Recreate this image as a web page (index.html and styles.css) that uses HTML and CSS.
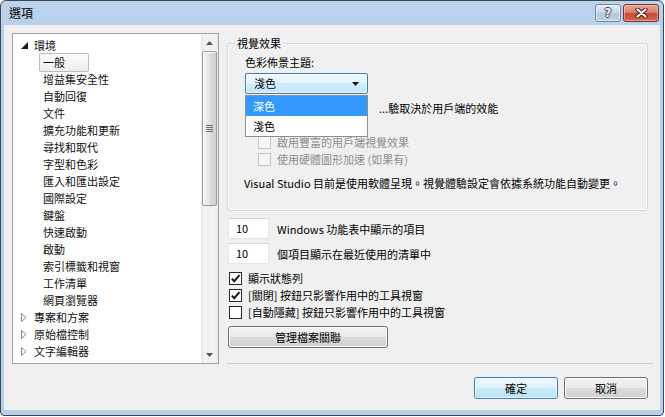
FILE: index.html
```html
<!DOCTYPE html>
<html lang="zh-Hant">
<head>
<meta charset="utf-8">
<title>選項</title>
<link rel="stylesheet" href="styles.css">
</head>
<body>
<div class="window">
  <div class="titlebar">
    <span class="title">選項</span>
    <div class="caption">
      <div class="cap-btn help"><span class="qmark">?</span></div>
      <div class="cap-btn close">
        <svg width="13" height="10" viewBox="0 0 13 10"><path d="M2.5 1.5 L10.5 8.5 M10.5 1.5 L2.5 8.5" stroke="#4b1d14" stroke-width="4.2" stroke-linecap="round"/><path d="M2.5 1.5 L10.5 8.5 M10.5 1.5 L2.5 8.5" stroke="#fff" stroke-width="2.2" stroke-linecap="round"/></svg>
      </div>
    </div>
  </div>
  <div class="client">
    <div class="main">
      <div class="tree">
        <ul class="nodes">
          <li class="node top"><span class="twisty"><svg width="7" height="7" viewBox="0 0 7 7"><polygon points="7,0 7,7 0,7" fill="#1a1a1a"/></svg></span><span class="label">環境</span></li>
          <li class="node child"><span class="label selected">一般</span></li>
          <li class="node child"><span class="label">增益集安全性</span></li>
          <li class="node child"><span class="label">自動回復</span></li>
          <li class="node child"><span class="label">文件</span></li>
          <li class="node child"><span class="label">擴充功能和更新</span></li>
          <li class="node child"><span class="label">尋找和取代</span></li>
          <li class="node child"><span class="label">字型和色彩</span></li>
          <li class="node child"><span class="label">匯入和匯出設定</span></li>
          <li class="node child"><span class="label">國際設定</span></li>
          <li class="node child"><span class="label">鍵盤</span></li>
          <li class="node child"><span class="label">快速啟動</span></li>
          <li class="node child"><span class="label">啟動</span></li>
          <li class="node child"><span class="label">索引標籤和視窗</span></li>
          <li class="node child"><span class="label">工作清單</span></li>
          <li class="node child"><span class="label">網頁瀏覽器</span></li>
          <li class="node top"><span class="twisty"><svg width="6" height="9" viewBox="0 0 6 9"><polygon points="0.5,0.5 5,4.5 0.5,8.5" fill="none" stroke="#8a8a8a"/></svg></span><span class="label">專案和方案</span></li>
          <li class="node top"><span class="twisty"><svg width="6" height="9" viewBox="0 0 6 9"><polygon points="0.5,0.5 5,4.5 0.5,8.5" fill="none" stroke="#8a8a8a"/></svg></span><span class="label">原始檔控制</span></li>
          <li class="node top"><span class="twisty"><svg width="6" height="9" viewBox="0 0 6 9"><polygon points="0.5,0.5 5,4.5 0.5,8.5" fill="none" stroke="#8a8a8a"/></svg></span><span class="label">文字編輯器</span></li>
        </ul>
        <div class="vscroll">
          <div class="sb-btn"><svg width="7" height="4" viewBox="0 0 7 4"><polygon points="3.5,0 7,4 0,4" fill="#555"/></svg></div>
          <div class="sb-track">
            <div class="sb-thumb"><svg width="7" height="7" viewBox="0 0 7 7"><path d="M0 0.5H7M0 2.5H7M0 4.5H7M0 6.5H7" stroke="#6f6f6f" stroke-width="1"/></svg></div>
          </div>
          <div class="sb-btn"><svg width="7" height="4" viewBox="0 0 7 4"><polygon points="0,0 7,0 3.5,4" fill="#555"/></svg></div>
        </div>
      </div>

      <div class="pane">
        <fieldset class="group">
          <legend>視覺效果</legend>
          <div class="group-body">
            <div class="field-label">色彩佈景主題:</div>
            <div class="combo-wrap">
              <div class="combo"><span>淺色</span><svg width="7" height="4" viewBox="0 0 7 4"><polygon points="0,0 7,0 3.5,4" fill="#111"/></svg></div>
              <ul class="dropdown">
                <li class="hl">深色</li>
                <li>淺色</li>
              </ul>
            </div>
            <div class="row"><span class="cb"></span><span class="auto-label">...驗取決於用戶端的效能</span></div>
            <div class="row"></div>
            <div class="row sub disabled"><span class="cb"></span><span>啟用豐富的用戶端視覺效果</span></div>
            <div class="row sub disabled"><span class="cb"></span><span>使用硬體圖形加速 (如果有)</span></div>
            <p class="note">Visual Studio 目前是使用軟體呈現。視覺體驗設定會依據系統功能自動變更。</p>
          </div>
        </fieldset>

        <div class="num-row first"><span class="num">10</span><span>Windows 功能表中顯示的項目</span></div>
        <div class="num-row"><span class="num">10</span><span>個項目顯示在最近使用的清單中</span></div>

        <div class="checks">
          <div class="row"><span class="cb"><svg width="11" height="11" viewBox="0 0 11 11"><path d="M1.8 5.6 L4.3 8.2 L9.4 2.2" fill="none" stroke="#1a1a1a" stroke-width="2"/></svg></span><span>顯示狀態列</span></div>
          <div class="row"><span class="cb"><svg width="11" height="11" viewBox="0 0 11 11"><path d="M1.8 5.6 L4.3 8.2 L9.4 2.2" fill="none" stroke="#1a1a1a" stroke-width="2"/></svg></span><span>[關閉] 按鈕只影響作用中的工具視窗</span></div>
          <div class="row"><span class="cb"></span><span>[自動隱藏] 按鈕只影響作用中的工具視窗</span></div>
        </div>

        <button class="btn assoc">管理檔案關聯</button>
      </div>
    </div>

    <div class="footer">
      <button class="btn default">確定</button>
      <button class="btn">取消</button>
    </div>
  </div>
</div>
</body>
</html>
```

FILE: styles.css
```css
* { box-sizing: border-box; }

html, body {
  margin: 0;
  padding: 0;
  background: #ffffff;
}

body {
  font-family: "Noto Sans CJK TC", "Noto Sans", sans-serif;
  font-size: 11px;
  color: #000;
}

ul { list-style: none; margin: 0; padding: 0; }

.window {
  width: 664px;
  height: 416px;
  border: 1px solid #3d4752;
  border-radius: 6px 6px 4px 4px;
  background: linear-gradient(#bcd3ec, #b9d0ea 30px);
  display: flex;
  flex-direction: column;
  padding: 0 3px 5px;
  overflow: hidden;
}

/* ---------- title bar ---------- */
.titlebar {
  height: 24px;
  flex: none;
  display: flex;
  justify-content: space-between;
  align-items: flex-start;
  padding-left: 5px;
}

.title {
  font-size: 12px;
  line-height: 16px;
  margin-top: 4px;
}

.caption {
  display: flex;
  gap: 2px;
  margin-top: 3px;
  margin-right: 1px;
}

.cap-btn {
  height: 18px;
  border-radius: 3px;
  display: flex;
  align-items: center;
  justify-content: center;
}

.help {
  width: 26px;
  border: 1px solid #6f87a3;
  background: linear-gradient(#e3ebf4, #cbd9e9 45%, #b2c6dc 55%, #c0d1e4);
  box-shadow: inset 0 0 0 1px rgba(255,255,255,0.5);
}

.qmark {
  color: #fff;
  font-family: "DejaVu Sans", sans-serif;
  font-weight: bold;
  font-size: 12px;
  line-height: 14px;
  text-shadow: 1px 0 0 #35495f, -1px 0 0 #35495f, 0 1px 0 #35495f, 0 -1px 0 #35495f;
}

.close {
  width: 36px;
  border: 1px solid #7a3126;
  background: linear-gradient(#e9a797, #d9806f 45%, #c64a37 55%, #d26a55);
  box-shadow: inset 0 0 0 1px rgba(255,255,255,0.35);
}

/* ---------- client ---------- */
.client {
  flex: 1;
  background: #f0f0f0;
  display: flex;
  flex-direction: column;
  padding: 8px 7px 11px 8px;
}

.main {
  display: flex;
  gap: 8px;
  height: 331px;
  flex: none;
}

/* ---------- tree ---------- */
.tree {
  width: 207px;
  border: 1px solid #a3a3a3;
  background: #fff;
  display: flex;
}

.nodes {
  flex: 1;
  padding-top: 3px;
}

.node {
  height: 17px;
  line-height: 17px;
  display: flex;
  align-items: center;
  white-space: nowrap;
  color: #111;
}

.node.top { padding-left: 7px; }

.twisty {
  width: 8px;
  margin-right: 6px;
  display: flex;
  justify-content: center;
  align-items: center;
}

.node.child { padding-left: 26px; }

.node.child .label {
  display: inline-block;
  padding: 0 3px;
  border: 1px solid transparent;
  line-height: 17px;
  height: 19px;
}

.node.child .label.selected {
  width: 50px;
  border-color: #bdbdbd;
  border-radius: 2px;
  background: linear-gradient(#fbfbfb, #eeeeee);
}

/* ---------- scrollbar ---------- */
.vscroll {
  width: 17px;
  display: flex;
  flex-direction: column;
  background: linear-gradient(to right, #e4e4e4, #f3f3f3 3px, #f3f3f3 13px, #ebebeb);
}

.sb-btn {
  height: 17px;
  display: flex;
  align-items: center;
  justify-content: center;
}

.sb-track {
  flex: 1;
  padding: 0 1px;
}

.sb-thumb {
  height: 155px;
  border: 1px solid #9b9b9b;
  border-radius: 2px;
  background: linear-gradient(to right, #f4f4f4, #e8e8e8 40%, #dadada 60%, #cfcfcf);
  box-shadow: inset 1px 1px 0 #fdfdfd;
  display: flex;
  align-items: center;
  justify-content: center;
}

/* ---------- right pane ---------- */
.pane {
  width: 426px;
  display: flex;
  flex-direction: column;
  align-items: flex-start;
  padding-top: 3px;
  border-bottom: 1px solid #d3d3d3;
}

.group {
  width: 421px;
  margin: 0;
  padding: 0;
  border: 1px solid #d0dbe3;
  border-radius: 3px;
  box-shadow: inset 0 0 0 1px #fbfdfe;
  min-inline-size: 0;
}

.group legend {
  margin-left: 7px;
  padding: 0 2px;
  line-height: 15px;
}

.group-body {
  padding: 4px 10px 19px 17px;
}

.field-label {
  line-height: 15px;
}

.combo-wrap {
  position: relative;
  margin-top: 3px;
  width: 123px;
}

.combo {
  height: 21px;
  border: 1px solid #3c7fb1;
  border-radius: 2px;
  background: linear-gradient(#f1f9fe, #e3f3fc 50%, #d3ecfa 50%, #c5e6f8);
  box-shadow: inset 0 0 0 1px rgba(255,255,255,0.6);
  display: flex;
  align-items: center;
  justify-content: space-between;
  padding: 0 8px;
  line-height: 19px;
}

.dropdown {
  position: absolute;
  top: 100%;
  left: 0;
  width: 123px;
  margin-top: 1px;
  border: 1px solid #8f8f8f;
  background: #fff;
  z-index: 5;
}

.dropdown li {
  height: 20px;
  line-height: 20px;
  padding-left: 7px;
}

.dropdown li.hl {
  background: #3399ff;
  color: #fff;
}

.row {
  height: 17px;
  line-height: 17px;
  display: flex;
  align-items: center;
  white-space: nowrap;
}

.combo-wrap + .row { margin-top: 6px; }

.auto-label { margin-left: 115px; }

.row.sub { padding-left: 13px; }

.cb {
  width: 13px;
  height: 13px;
  flex: none;
  border: 1px solid #2a2a2a;
  background: #fff;
  display: inline-flex;
  align-items: center;
  justify-content: center;
  margin-right: 6px;
}

.row.disabled { color: #8e8e8e; }

.row.disabled .cb {
  border-color: #c4c4c4;
  background: #f6f6f6;
}

.note {
  margin: 8px 0 0 -1px;
  line-height: 15px;
  white-space: nowrap;
}

.num-row {
  display: flex;
  align-items: center;
  gap: 8px;
  margin-left: 1px;
  margin-top: 4px;
}

.num-row.first { margin-top: 7px; }

.num {
  width: 41px;
  height: 21px;
  background: #fff;
  border: 1px solid #e4e6ea;
  border-top-color: #d6d8dc;
  padding-left: 7px;
  line-height: 19px;
}

.checks {
  margin-top: 6px;
  margin-left: 2px;
}

/* ---------- buttons ---------- */
.btn {
  font: inherit;
  color: #000;
  height: 22px;
  padding: 0;
  border: 1px solid #707070;
  border-radius: 3px;
  background: linear-gradient(#f2f2f2, #ebebeb 50%, #dddddd 50%, #cfcfcf);
  box-shadow: inset 0 0 0 1px #fbfbfb;
  line-height: 20px;
}

.btn.assoc {
  width: 160px;
  margin-top: 5px;
  margin-left: 1px;
}

.btn.default {
  border-color: #3c7fb1;
  background: linear-gradient(#eef8fe, #dff2fc 50%, #cbeafb 50%, #b9e1f7);
  box-shadow: inset 0 0 0 1px #f4fbff;
}

.footer {
  display: flex;
  justify-content: flex-end;
  gap: 6px;
  padding-top: 13px;
  padding-right: 5px;
}

.footer .btn { width: 84px; }
```
